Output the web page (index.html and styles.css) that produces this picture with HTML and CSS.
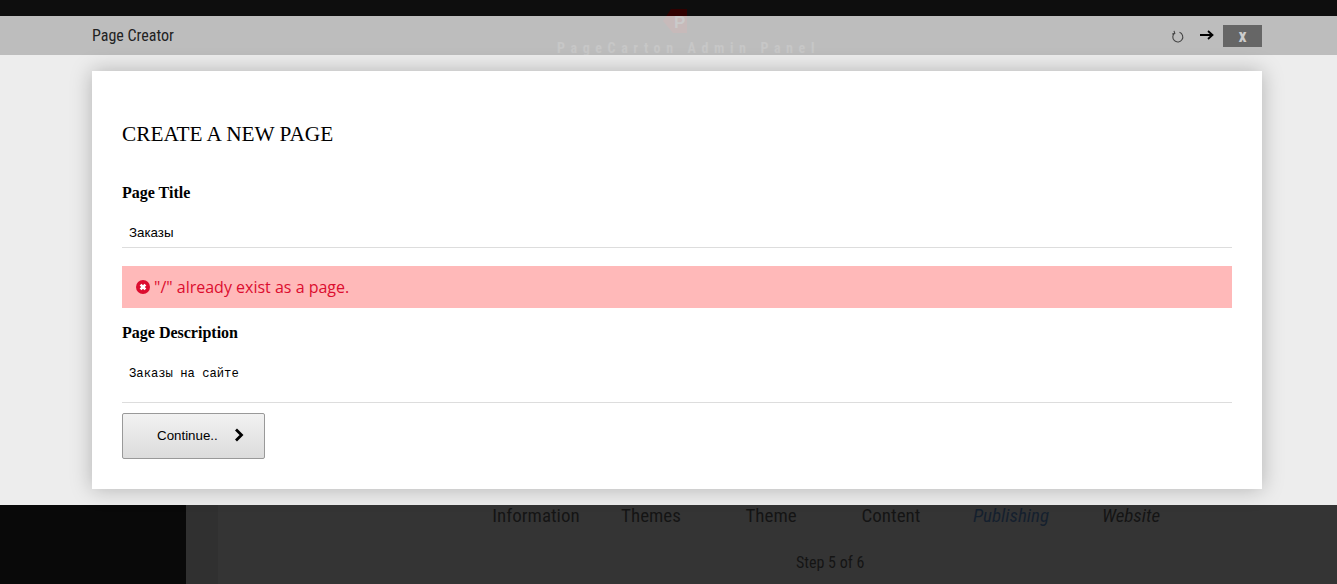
FILE: index.html

```html
<!DOCTYPE html>
<html lang="en">
<head>
<meta charset="UTF-8" />
<meta name="viewport" content="width=device-width, initial-scale=1" />
<title>Page Creator</title>
<link rel="stylesheet" href="styles.css">
</head>
<body>
<div class="adminPage">
  <header class="adminHeader">
    <div class="adminLogo">
      <svg class="adminLogoShape" viewBox="0 0 24 24" aria-hidden="true"><path d="M8 0H24V24H10L0 12z"/></svg>
      <span class="adminLogoLetter">P</span>
    </div>
    <div class="adminName">PageCarton Admin Panel</div>
  </header>
  <div class="adminBody">
    <aside class="sideBar"></aside>
    <main class="stepsArea">
      <div class="stepsRow">
        <span class="step stepFirst">Information</span>
        <span class="step">Themes</span>
        <span class="step">Theme</span>
        <span class="step">Content</span>
        <span class="step stepCurrent">Publishing</span>
        <span class="step stepNext">Website</span>
      </div>
      <div class="stepCount">Step 5 of 6</div>
    </main>
  </div>
</div>

<div class="creatorWindow" role="dialog" aria-label="Page Creator">
  <div class="creatorBar">
    <span class="creatorTitle">Page Creator</span>
    <div class="creatorTools">
      <svg class="toolRefresh" viewBox="0 0 14 14" aria-hidden="true"><path d="M8.500 2.300A5 5 0 1 1 3.800 3M3 .8L3.800 3.400 1.200 4" fill="none" stroke="#444" stroke-width="1.100"/></svg>
      <svg class="toolArrow" viewBox="0 0 14 12" aria-hidden="true"><path d="M0 6H12M8 2l4.500 4L8 10" fill="none" stroke="#000" stroke-width="1.800"/></svg>
      <button class="closeBtn" type="button">x</button>
    </div>
  </div>
  <div class="creatorContent">
    <form class="pageCard">
      <h2 class="cardTitle">CREATE A NEW PAGE</h2>
      <label class="fieldLabel" for="pageTitle">Page Title</label>
      <input class="titleInput" id="pageTitle" type="text" value="Заказы">
      <div class="errorBox">
        <svg class="errorIcon" viewBox="0 0 14 14" aria-hidden="true">
          <circle cx="7" cy="7" r="7" fill="#dc0d2f"/>
          <path d="M4.600 4.600l4.800 4.800M9.400 4.600l-4.800 4.800" stroke="#fff" stroke-width="2.600"/>
        </svg>
        <span>"/" already exist as a page.</span>
      </div>
      <label class="fieldLabel fieldLabelSecond" for="pageDesc">Page Description</label>
      <textarea class="descInput" id="pageDesc" rows="2">Заказы на сайте</textarea>
      <button class="continueBtn" type="button">
        Continue..
        <svg class="chevron" viewBox="0 0 10 14" aria-hidden="true"><path d="M2 1.500L7.500 7 2 12.500" fill="none" stroke="#000" stroke-width="2.800"/></svg>
      </button>
    </form>
  </div>
</div>
</body>
</html>
```

FILE: styles.css

```css
html, body {
  margin: 0;
  height: 100%;
  overflow: hidden;
}

body {
  background: #0e0e0e;
  font-family: "Liberation Serif", serif;
  color: #000;
}

.adminPage {
  height: 584px;
  display: flex;
  flex-direction: column;
}

.adminHeader {
  height: 505px;
  background: #0e0e0e;
  display: flex;
  flex-direction: column;
  align-items: center;
  padding: 9px 0 0 40px;
  box-sizing: border-box;
}
.adminLogo {
  width: 24px;
  height: 24px;
  margin-left: -27px;
  position: relative;
}
.adminLogoShape {
  display: block;
  width: 24px;
  height: 24px;
  fill: #300000;
}
.adminLogoLetter {
  position: absolute;
  top: 4px;
  left: 11px;
  font: bold 17px "Liberation Sans", sans-serif;
  color: #3c3c3c;
}
.adminName {
  margin-top: 7px;
  font: bold 14px Roboto, sans-serif;
  font-stretch: condensed;
  letter-spacing: 5.600px;
  color: #303030;
  white-space: nowrap;
}

.adminBody {
  flex: 1;
  display: flex;
}
.sideBar {
  width: 186px;
  background: #090909;
}
.stepsArea {
  flex: 1;
  background: linear-gradient(90deg, #303030 32px, #343434 32px);
  font-family: Roboto, sans-serif;
  font-stretch: condensed;
  color: #141414;
}
.stepsRow {
  display: flex;
  padding-left: 285px;
  line-height: 22px;
}
.step {
  width: 120px;
  text-align: center;
  font-size: 19px;
}
.stepFirst {
  padding-left: 10px;
  box-sizing: border-box;
}
.stepCurrent {
  font-style: italic;
  color: #14202e;
}
.stepNext {
  font-style: italic;
}
.stepCount {
  margin-top: 26px;
  margin-left: 610px;
  font-size: 16px;
}

.creatorWindow {
  position: absolute;
  top: 16px;
  left: 0;
  right: 0;
  height: 489px;
  display: flex;
  flex-direction: column;
}
.creatorBar {
  height: 39px;
  flex: none;
  background: rgba(255, 255, 255, 0.73);
  display: flex;
  align-items: center;
  justify-content: space-between;
  padding: 0 75px 0 92px;
  font-family: Roboto, sans-serif;
  font-stretch: condensed;
}
.creatorTitle {
  font-size: 16px;
  color: #222;
}
.creatorTools {
  display: flex;
  align-items: center;
}
.toolRefresh {
  width: 14px;
  height: 14px;
  margin: 2px 15px 0 -1px;
}
.toolArrow {
  width: 14px;
  height: 12px;
  margin: -2px 9px 0 0;
}
.closeBtn {
  width: 39px;
  height: 22px;
  border: none;
  padding: 0 0 2px;
  background: #666;
  color: #ccc;
  font: bold 18px Roboto, sans-serif;
  font-stretch: condensed;
}

.creatorContent {
  flex: 1;
  background: #ededed;
  padding: 16px 75px 16px 92px;
}
.pageCard {
  height: 418px;
  box-sizing: border-box;
  background: #fff;
  box-shadow: 0 0 20px rgba(0, 0, 0, 0.25);
  padding: 51px 30px 0;
  display: flex;
  flex-direction: column;
}
.cardTitle {
  margin: 0 0 38px;
  font-size: 21.300px;
  font-weight: normal;
  line-height: 24px;
}
.fieldLabel {
  font-size: 16px;
  font-weight: bold;
  line-height: 18px;
}
.fieldLabelSecond {
  margin-top: 16px;
}
.titleInput {
  margin-top: 13px;
  height: 33px;
  box-sizing: border-box;
  border: none;
  border-bottom: 1px solid #ddd;
  padding: 2px 7px 0;
  font: 13.330px "Liberation Sans", sans-serif;
  color: #000;
  outline: none;
}
.errorBox {
  margin-top: 18px;
  height: 42px;
  background: #ffb9b9;
  display: flex;
  align-items: center;
  gap: 4px;
  padding-left: 14px;
  font: 16px "Open Sans", sans-serif;
  color: #dc0d2f;
}
.errorIcon {
  width: 14px;
  height: 14px;
}
.descInput {
  margin-top: 12px;
  height: 49px;
  box-sizing: border-box;
  border: none;
  border-bottom: 1px solid #ddd;
  padding: 13px 7px 0;
  resize: none;
  font: 12.200px "Liberation Mono", monospace;
  color: #000;
  outline: none;
}
.continueBtn {
  margin-top: 10px;
  width: 143px;
  height: 46px;
  box-sizing: border-box;
  border: 1px solid #999;
  border-radius: 2px;
  background: linear-gradient(#f2f2f2, #dcdcdc);
  font: 13.330px "Liberation Sans", sans-serif;
  color: #000;
  display: flex;
  align-items: center;
  padding: 0 0 2px 34px;
}
.chevron {
  width: 10px;
  height: 14px;
  margin-left: 16px;
}
```
